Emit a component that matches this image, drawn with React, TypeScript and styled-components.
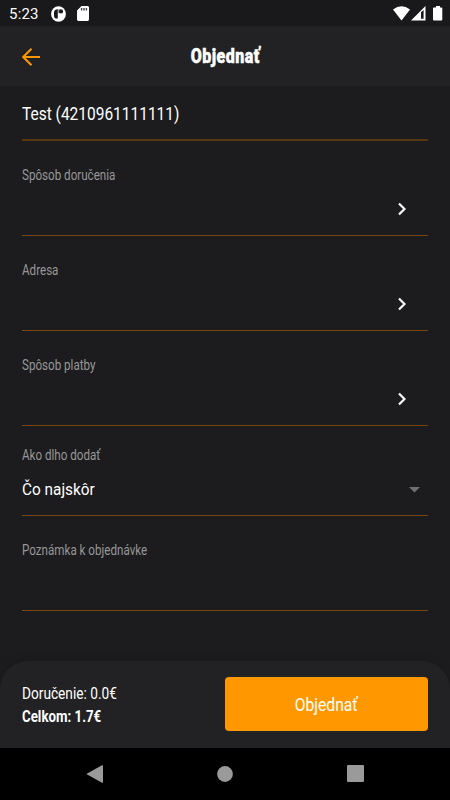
import React from "react";
import styled, { createGlobalStyle } from "styled-components";

const GlobalStyle = createGlobalStyle`
  * { box-sizing: border-box; }
  body { margin: 0; background: #1c1c1e; font-family: Roboto, "Liberation Sans", sans-serif; }
`;

const Screen = styled.div`
  width: 450px;
  height: 800px;
  display: flex;
  flex-direction: column;
  background: #1c1c1e;
  color: #fff;
  overflow: hidden;
`;

const StatusBar = styled.div`
  height: 26px;
  flex: none;
  display: flex;
  align-items: center;
  justify-content: space-between;
  padding: 1px 7px 0 9px;
  background: #19191b;
`;

const StatusGroup = styled.div<{ $gap: number }>`
  display: flex;
  align-items: center;
  gap: ${(p) => p.$gap}px;
`;

const Clock = styled.span`
  width: 31px;
  font-size: 15px;
  line-height: 20px;
  letter-spacing: 0.2px;
  white-space: nowrap;
`;

const Header = styled.header`
  height: 61px;
  flex: none;
  display: grid;
  grid-template-columns: 60px 1fr 60px;
  align-items: center;
  background: #222224;
  border-bottom: 1px solid #1e1e20;
`;

const BackButton = styled.button`
  display: flex;
  padding: 1px 0 0 22px;
  border: 0;
  background: none;
`;

const Title = styled.h1`
  margin: 0;
  text-align: center;
  font-size: 21px;
  line-height: 28px;
  font-weight: 900;
  letter-spacing: 0.6px;
  -webkit-text-stroke: 0.5px #fff;
`;

/* Narrow lettering: the box keeps the natural width, glyphs are condensed. */
const Condensed = styled.span<{ $ratio: number; $origin?: string }>`
  display: inline-block;
  white-space: nowrap;
  transform: scaleX(${(p) => p.$ratio});
  transform-origin: ${(p) => p.$origin ?? "left"} center;
`;

const Form = styled.main`
  flex: 1;
  padding: 0 22px;
  display: flex;
  flex-direction: column;
`;

const Field = styled.div<{ $height: number; $top: number; $thick?: boolean }>`
  flex: none;
  height: ${(p) => p.$height}px;
  padding-top: ${(p) => p.$top}px;
  border-bottom: ${(p) => (p.$thick ? "2px solid #553813" : "1px solid #74480f")};
`;

const Label = styled.div`
  font-size: 14px;
  line-height: 20px;
  color: #979798;
`;

const Value = styled.div`
  font-size: 18px;
  line-height: 24px;
`;

const PickerRow = styled.div<{ $right: number; $top: number }>`
  display: flex;
  align-items: center;
  justify-content: space-between;
  height: 24px;
  margin-top: ${(p) => p.$top}px;
  padding-right: ${(p) => p.$right}px;
`;

const Selected = styled.span`
  padding-bottom: 2px;
  font-size: 16px;
  line-height: 21px;
`;

const Footer = styled.footer`
  height: 87px;
  flex: none;
  display: flex;
  justify-content: space-between;
  padding: 16px 22px 0;
  background: #222224;
  border-radius: 28px 28px 0 0;
  box-shadow: 0 -2px 8px rgba(0, 0, 0, 0.12);
`;

const Totals = styled.div`
  padding-top: 5px;
  font-size: 16px;
  line-height: 23px;
`;

const TotalLine = styled.div<{ $bold?: boolean }>`
  font-weight: ${(p) => (p.$bold ? 700 : 400)};
`;

const OrderButton = styled.button`
  width: 203px;
  height: 54px;
  padding: 1px 0 0;
  border: 0;
  border-radius: 4px;
  background: #ff9800;
  color: #fff;
  font: 400 18px/24px Roboto, sans-serif;
`;

const NavBar = styled.nav`
  height: 52px;
  flex: none;
  display: grid;
  grid-template-columns: 17px 16px 17px;
  column-gap: 114px;
  align-items: center;
  padding: 0 0 1px 85.500px;
  background: #000;
`;

const Chevron = () => (
  <svg width="10" height="14" viewBox="0 0 10 14" fill="none" stroke="#f4f4f4" strokeWidth="2.2">
    <path d="M2 1.400 7.500 7 2 12.600" />
  </svg>
);

const pickers = ["Spôsob doručenia", "Adresa", "Spôsob platby"];

export default function App() {
  return (
    <Screen>
      <GlobalStyle />
      <StatusBar>
        <StatusGroup $gap={11}>
          <Clock>5:23</Clock>
          <StatusGroup $gap={11}>
            <svg width="15" height="16" viewBox="0 0 15 16">
              <ellipse cx="7.5" cy="8" rx="7.4" ry="7.8" fill="#fff" />
              <path d="M6.800 3.200v9.300H5.800A2.800 2.800 0 0 1 3 9.700V6.500a3.200 3.200 0 0 1 3.800-3.300Z" fill="#19191b" />
              <circle cx="10" cy="5.400" r="2.100" fill="#19191b" />
              <path d="M8 3.200v4" stroke="#19191b" strokeWidth="0.800" />
            </svg>
            <svg width="12" height="15" viewBox="0 0 12 15">
              <path d="M4.500 0h6A1.400 1.400 0 0 1 12 1.400v12.200a1.400 1.400 0 0 1-1.400 1.400H1.400A1.400 1.400 0 0 1 0 13.600V4.500Z" fill="#fff" />
              <path d="M4.600 2v2.500M7 2v2.500M9.400 2v2.500" stroke="#444" strokeWidth="1.400" />
            </svg>
          </StatusGroup>
        </StatusGroup>
        <StatusGroup $gap={1}>
          <svg width="17" height="15" viewBox="0 0 17 15">
            <path d="M0 3.500Q8.500-3 17 3.500L8.500 14.500Z" fill="#fff" />
          </svg>
          <svg width="15" height="15" viewBox="0 0 15 15">
            <path d="M0 14.500 14.500 0v14.500Z" fill="#fff" />
            <path d="M10 6.200 12.600 4v8.800H10Z" fill="#19191b" />
          </svg>
          <svg width="16" height="15" viewBox="0 0 16 15">
            <path d="M9 0h4v1.500h1.500a.8.8 0 0 1 .8.8v11.200a1 1 0 0 1-1 1H7a1 1 0 0 1-1-1V2.300a.8.8 0 0 1 .8-.8H9Z" fill="#fff" />
          </svg>
        </StatusGroup>
      </StatusBar>
      <Header>
        <BackButton aria-label="Späť">
          <svg width="18" height="18" viewBox="0 0 18 18" fill="none" stroke="#ff9800" strokeWidth="2">
            <path d="M18 9H1.500M9.500.7 1.200 9l8.300 8.300" />
          </svg>
        </BackButton>
        <Title>
          <Condensed $ratio={0.765} $origin="center">Objednať</Condensed>
        </Title>
      </Header>
      <Form>
        <Field $height={54} $top={15} $thick>
          <Value>
            <Condensed $ratio={0.86}>Test (4210961111111)</Condensed>
          </Value>
        </Field>
        {pickers.map((label) => (
          <Field key={label} $height={95} $top={24}>
            <Label>
              <Condensed $ratio={0.83}>{label}</Condensed>
            </Label>
            <PickerRow $right={21} $top={12}>
              <span />
              <Chevron />
            </PickerRow>
          </Field>
        ))}
        <Field $height={90} $top={19}>
          <Label>
            <Condensed $ratio={0.83}>Ako dlho dodať</Condensed>
          </Label>
          <PickerRow $right={8} $top={13}>
            <Selected>
              <Condensed $ratio={0.96}>Čo najskôr</Condensed>
            </Selected>
            <svg width="11" height="6" viewBox="0 0 11 6">
              <path d="M0 0h11L5.500 5.500Z" fill="#707072" />
            </svg>
          </PickerRow>
        </Field>
        <Field $height={95} $top={24}>
          <Label>
            <Condensed $ratio={0.83}>Poznámka k objednávke</Condensed>
          </Label>
        </Field>
      </Form>
      <Footer>
        <Totals>
          <TotalLine>
            <Condensed $ratio={0.855}>Doručenie: 0.0€</Condensed>
          </TotalLine>
          <TotalLine $bold>
            <Condensed $ratio={0.83}>Celkom: 1.7€</Condensed>
          </TotalLine>
        </Totals>
        <OrderButton>
          <Condensed $ratio={0.87} $origin="center">Objednať</Condensed>
        </OrderButton>
      </Footer>
      <NavBar>
        <svg width="17" height="18" viewBox="0 0 17 18">
          <path d="M17 .8v16.400a.7.700 0 0 1-1 .5L1.200 9.600a.7.700 0 0 1 0-1.200L16 .3a.7.700 0 0 1 1 .5Z" fill="#9a9a9a" />
        </svg>
        <svg width="16" height="16" viewBox="0 0 16 16">
          <circle cx="8" cy="8" r="7.900" fill="#9a9a9a" />
        </svg>
        <svg width="17" height="17" viewBox="0 0 17 17">
          <rect width="17" height="17" rx="1" fill="#9a9a9a" />
        </svg>
      </NavBar>
    </Screen>
  );
}
